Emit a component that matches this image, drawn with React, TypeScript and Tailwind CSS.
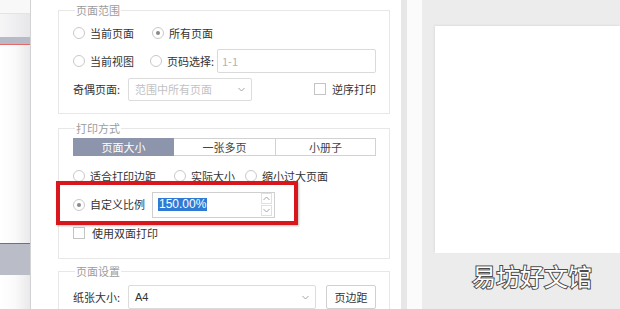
import React from "react";

const Radio = ({ checked = false }: { checked?: boolean }) => (
  <span className="flex h-[12px] w-[12px] shrink-0 items-center justify-center rounded-full border border-[#c9c9c9] bg-white">
    {checked && <span className="h-[4px] w-[4px] rounded-full bg-[#8a8a8a]" />}
  </span>
);

const Checkbox = () => (
  <span className="h-[12px] w-[12px] shrink-0 border border-[#c4c4c4] bg-white" />
);

const Chevron = ({ up = false }: { up?: boolean }) => (
  <svg width="7" height="5" viewBox="0 0 7 5" className="shrink-0">
    <polyline
      points={up ? "0.5,4 3.5,1 6.5,4" : "0.5,1 3.5,4 6.5,1"}
      fill="none"
      stroke="#9a9a9a"
      strokeWidth="0.9"
    />
  </svg>
);

const RadioItem = ({ label, checked, w }: { label: string; checked?: boolean; w: string }) => (
  <div className={`flex items-center gap-[5px] ${w}`}>
    <Radio checked={checked} />
    <span>{label}</span>
  </div>
);

export default function App() {
  return (
    <div className="flex h-[309px] w-[620px] overflow-hidden bg-white text-[11px] text-[#333] font-['Noto_Sans_CJK_SC','Noto_Sans',sans-serif]">
      {/* ── left strip ── */}
      <div className="flex w-[31px] shrink-0 flex-col border-r border-[#d2d2d4]">
        <div className="h-[14px] border-b border-[#e4e4e6] bg-[#f8f8f8]" />
        <div className="h-[23px] bg-gradient-to-r from-[#f6f6f7] to-[#e7e7ea]" />
        <div className="h-[8px] border-b border-[#e46a6a] bg-[#b8bbc7]" />
        <div className="h-[198px] bg-gradient-to-r from-white via-[#fafafa] to-[#e9e9eb]" />
        <div className="h-[32px] border-t border-[#d94444] bg-[#babdc8]" />
        <div className="flex-1 bg-gradient-to-r from-white via-[#fafafa] to-[#e9e9eb]" />
      </div>

      {/* ── dialog ── */}
      <div className="flex w-[370px] shrink-0 flex-col pl-[27px] pr-[11px]">
        {/* 页面范围 */}
        <fieldset className="mt-[2px] border border-[#e7e7e7]">
          <legend className="ml-[16px] px-[1px] leading-[16px] text-[#9c9c9c]">页面范围</legend>
          <div className="flex flex-col pl-[14px] pr-[13px] pt-[1px] pb-[10px]">
            <div className="flex h-[28px] items-center">
              <RadioItem label="当前页面" w="w-[79px]" />
              <RadioItem label="所有页面" checked w="" />
            </div>
            <div className="flex h-[28px] items-center">
              <RadioItem label="当前视图" w="w-[77px]" />
              <div className="flex items-center gap-[5px]">
                <Radio />
                <span>页码选择:</span>
              </div>
              <div className="ml-auto flex h-[24px] w-[159px] items-center rounded-[2px] border border-[#dadada] px-[4px] text-[#b3b3b3]">
                1-1
              </div>
            </div>
            <div className="flex h-[28px] items-center">
              <span className="w-[55px]">奇偶页面:</span>
              <div className="flex h-[23px] w-[124px] items-center justify-between rounded-[2px] border border-[#dcdcdc] pl-[6px] pr-[6px] text-[#c2c2c2]">
                <span>范围中所有页面</span>
                <Chevron />
              </div>
              <div className="ml-auto flex items-center gap-[6px]">
                <Checkbox />
                <span>逆序打印</span>
              </div>
            </div>
          </div>
        </fieldset>

        {/* 打印方式 */}
        <fieldset className="mt-[6px] border border-[#e7e7e7]">
          <legend className="ml-[16px] px-[1px] leading-[16px] text-[#9c9c9c]">打印方式</legend>
          <div className="flex flex-col pl-[14px] pr-[13px] pt-[2px] pb-[11px]">
            <div className="flex h-[18px] w-[303px]">
              <div className="flex w-[101px] items-center justify-center border border-[#8c95ab] bg-[#8c95ab] text-white">
                页面大小
              </div>
              <div className="flex w-[101px] items-center justify-center border-y border-[#d2d2d2] text-[#444]">
                一张多页
              </div>
              <div className="flex w-[101px] items-center justify-center border border-[#d2d2d2] text-[#444]">
                小册子
              </div>
            </div>
            <div className="mt-[6px] flex h-[28px] items-center">
              <RadioItem label="适合打印边距" w="w-[101px]" />
              <RadioItem label="实际大小" w="w-[71px]" />
              <RadioItem label="缩小过大页面" w="" />
            </div>
            <div className="relative flex h-[29px] items-center">
              <RadioItem label="自定义比例" checked w="w-[79px]" />
              <div className="flex h-[26px] w-[123px] items-center border border-[#cfcfcf] bg-white pl-[5px] pr-[2px]">
                <span className="bg-[#2f7ad4] px-[1px] text-[12px] leading-[13px] text-white font-['Liberation_Sans',sans-serif]">
                  150.00%
                </span>
                <div className="ml-auto flex flex-col gap-[1px]">
                  <div className="flex h-[11px] w-[11px] items-center justify-center border border-[#e0e0e0]">
                    <Chevron up />
                  </div>
                  <div className="flex h-[11px] w-[11px] items-center justify-center border border-[#e0e0e0]">
                    <Chevron />
                  </div>
                </div>
              </div>
              {/* annotation box */}
              <div className="pointer-events-none absolute -left-[17px] -top-[9px] h-[44px] w-[242px] border-[4px] border-[#d9161c] shadow-[1px_1px_2px_rgba(0,0,0,0.25)]" />
            </div>
            <div className="flex h-[28px] items-center gap-[7px]">
              <Checkbox />
              <span>使用双面打印</span>
            </div>
          </div>
        </fieldset>

        {/* 页面设置 */}
        <fieldset className="mt-[4px] border border-[#e7e7e7]">
          <legend className="ml-[16px] px-[1px] leading-[16px] text-[#9c9c9c]">页面设置</legend>
          <div className="flex h-[40px] items-start pl-[14px] pr-[13px] pt-[6px]">
            <div className="flex h-[24px] w-full items-center">
              <span className="w-[55px]">纸张大小:</span>
              <div className="flex h-[24px] w-[188px] items-center justify-between rounded-[2px] border border-[#dcdcdc] px-[6px]">
                <span className="font-['Liberation_Sans',sans-serif]">A4</span>
                <Chevron />
              </div>
              <div className="ml-[10px] flex h-[24px] w-[50px] items-center justify-center rounded-[2px] border border-[#d0d0d0]">
                页边距
              </div>
            </div>
          </div>
        </fieldset>
      </div>

      {/* ── separators ── */}
      <div className="w-[6px] shrink-0 bg-[#e7e7e7]" />
      <div className="w-[15px] shrink-0 bg-[#fbfbfb]" />

      {/* ── preview ── */}
      <div className="flex flex-1 flex-col bg-[#ececec] pl-[13px] pt-[26px]">
        <div className="h-[227px] bg-white shadow-[-1px_-1px_2px_rgba(0,0,0,0.06)]" />
        <div className="mt-[9px] pl-[37px] text-[24px] leading-[28px] text-white [-webkit-text-stroke:2px_#4a4a4a] [paint-order:stroke_fill] font-['Noto_Sans_CJK_SC',sans-serif]">
          易坊好文馆
        </div>
      </div>
    </div>
  );
}
